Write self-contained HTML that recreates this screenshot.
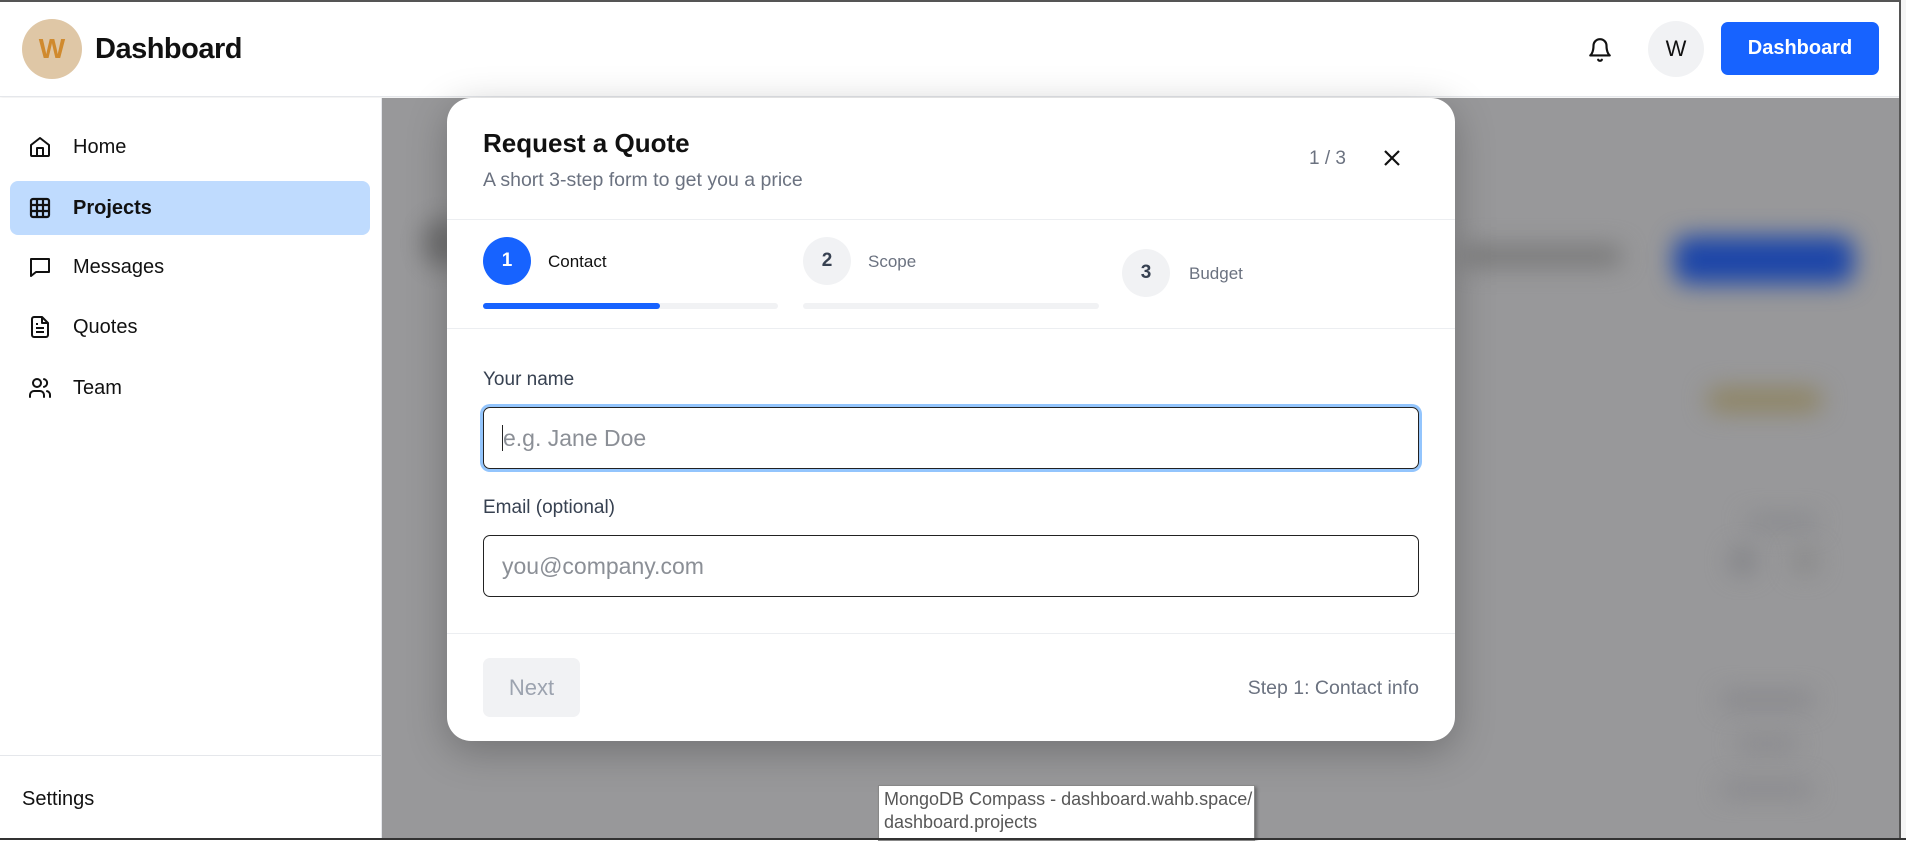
<!DOCTYPE html>
<html><head><meta charset="utf-8"><style>
*{box-sizing:border-box;margin:0;padding:0}
body{width:1906px;height:840px;overflow:hidden;background:#fff;font-family:"Liberation Sans",Arial,sans-serif;position:relative;color:#111}
.abs{position:absolute}
#top{left:0;top:0;width:1906px;height:2px;background:#555}
#header{left:0;top:0;width:1900px;height:97px;background:#fff;border-bottom:1px solid #e5e7eb;box-shadow:0 2px 4px rgba(0,0,0,.06)}
#rline{left:1899px;top:0;width:2px;height:840px;background:#555}
#rstrip{left:1901px;top:0;width:5px;height:840px;background:#f5f5f5}
.logo{left:22px;top:19px;width:60px;height:60px;border-radius:50%;background:#dfc7a6;color:#d08a2e;font-size:28px;font-weight:bold;text-align:center;line-height:60px}
.title{left:95px;top:33px;font-size:29px;font-weight:bold;letter-spacing:-0.5px}
#side{left:0;top:98px;width:382px;height:742px;background:#fff;border-right:1px solid #e5e7eb}
.item{position:absolute;left:10px;width:360px;height:54px;border-radius:8px;font-size:20px;line-height:54px;padding-left:63px}
.item svg{position:absolute;left:18px;top:15px}
.act{background:#bfdbfe;font-weight:bold}
#overlay{left:382px;top:98px;width:1517px;height:742px;background:#98989a;overflow:hidden}
.blur{position:absolute;filter:blur(12px)}
#modal{left:447px;top:98px;width:1008px;height:643px;background:#fff;border-radius:24px;box-shadow:0 10px 40px rgba(0,0,0,.25)}
.hr{position:absolute;left:0;width:1008px;height:1px;background:#eceef1}
.circ{position:absolute;width:48px;height:48px;border-radius:50%;text-align:center;line-height:48px;font-size:19px;font-weight:bold}
.lbl{position:absolute;font-size:17px}
.bar{position:absolute;height:6px;border-radius:3px;background:#f1f2f4}
.input{position:absolute;left:36px;width:936px;height:62px;border:1.5px solid #222;border-radius:7px;font-size:23px;color:#8b8f96;padding-left:18px;line-height:60px}
.flabel{position:absolute;left:36px;font-size:19px;color:#374151}
#tip{left:878px;top:785px;width:377px;height:56px;background:#fff;border:1px solid #888;box-shadow:2px 2px 3px rgba(0,0,0,.3);font-size:18px;color:#575757;padding:2px 0 0 5px;line-height:23px}
</style></head><body>
<div id="header" class="abs">
 <div class="abs logo">W</div>
 <div class="abs title">Dashboard</div>
 <svg class="abs" style="left:1587px;top:36px" width="26" height="28" viewBox="0 0 24 24" fill="none" stroke="#111" stroke-width="2" stroke-linecap="round" stroke-linejoin="round"><path d="M6 8a6 6 0 0 1 12 0c0 7 3 9 3 9H3s3-2 3-9"/><path d="M10.3 21a1.94 1.94 0 0 0 3.4 0"/></svg>
 <div class="abs" style="left:1648px;top:21px;width:56px;height:56px;border-radius:50%;background:#f1f2f4;text-align:center;line-height:56px;font-size:22px">W</div>
 <div class="abs" style="left:1721px;top:22px;width:158px;height:53px;border-radius:7px;background:#1763ff;color:#fff;font-weight:bold;font-size:20px;text-align:center;line-height:53px">Dashboard</div>
</div>
<div id="side" class="abs">
 <div class="item" style="top:22px"><svg width="24" height="24" viewBox="0 0 24 24" fill="none" stroke="#111" stroke-width="2" stroke-linejoin="round"><path d="M3 10l9-7 9 7v10a1 1 0 0 1-1 1H4a1 1 0 0 1-1-1z"/><path d="M9 21v-8h6v8"/></svg>Home</div>
 <div class="item act" style="top:83px"><svg width="24" height="24" viewBox="0 0 24 24" fill="none" stroke="#111" stroke-width="2.2"><rect x="3" y="3" width="18" height="18" rx="2"/><path d="M3 9h18M3 15h18M9 3v18M15 3v18"/></svg>Projects</div>
 <div class="item" style="top:142px"><svg width="24" height="24" viewBox="0 0 24 24" fill="none" stroke="#111" stroke-width="2" stroke-linejoin="round"><path d="M3 4h18v13H8l-5 4z"/></svg>Messages</div>
 <div class="item" style="top:202px"><svg width="24" height="24" viewBox="0 0 24 24" fill="none" stroke="#111" stroke-width="2" stroke-linejoin="round"><path d="M14 2H6a2 2 0 0 0-2 2v16a2 2 0 0 0 2 2h12a2 2 0 0 0 2-2V8z"/><path d="M14 2v6h6M8 13h8M8 17h8M8 9h2"/></svg>Quotes</div>
 <div class="item" style="top:263px"><svg width="24" height="24" viewBox="0 0 24 24" fill="none" stroke="#111" stroke-width="2" stroke-linecap="round"><circle cx="9" cy="7" r="4"/><path d="M2 21v-2a4 4 0 0 1 4-4h6a4 4 0 0 1 4 4v2M16 3.1a4 4 0 0 1 0 7.8M22 21v-2a4 4 0 0 0-3-3.9"/></svg>Team</div>
 <div class="abs" style="left:0;top:657px;width:381px;height:1px;background:#e5e7eb"></div>
 <div class="abs" style="left:22px;top:690px;font-size:20px">Settings</div>
</div>
<div id="overlay" class="abs">
 <div class="blur" style="left:40px;top:120px;width:40px;height:50px;border-radius:50%;background:#555;opacity:.6"></div>
 <div class="blur" style="left:1080px;top:148px;width:160px;height:20px;border-radius:9px;background:#777"></div>
 <div class="blur" style="left:1292px;top:138px;width:180px;height:48px;border-radius:14px;background:#1d46a8"></div>
 <div class="blur" style="left:1325px;top:290px;width:115px;height:24px;border-radius:12px;background:#8e8462"></div>
 <div class="blur" style="left:1365px;top:418px;width:70px;height:12px;background:#85868a"></div>
 <div class="blur" style="left:1348px;top:450px;width:26px;height:26px;border-radius:50%;background:#808185"></div>
 <div class="blur" style="left:1410px;top:450px;width:26px;height:26px;border-radius:50%;background:#888"></div>
 <div class="blur" style="left:1340px;top:595px;width:90px;height:14px;background:#858589"></div>
 <div class="blur" style="left:1355px;top:640px;width:60px;height:12px;background:#858589"></div>
 <div class="blur" style="left:1340px;top:685px;width:90px;height:12px;background:#858589"></div>
</div>
<div id="modal" class="abs">
 <div class="abs" style="left:36px;top:30px;font-size:26px;font-weight:bold">Request a Quote</div>
 <div class="abs" style="left:36px;top:71px;font-size:19.5px;color:#6b7280">A short 3-step form to get you a price</div>
 <div class="abs" style="left:862px;top:50px;font-size:19px;color:#6b7280">1 / 3</div>
 <svg class="abs" style="left:935px;top:50px" width="20" height="20" viewBox="0 0 20 20" stroke="#111" stroke-width="2.2"><path d="M3 3l14 14M17 3L3 17"/></svg>
 <div class="hr" style="top:121px"></div>
 <div class="circ" style="left:36px;top:139px;background:#1763ff;color:#fff">1</div>
 <div class="lbl" style="left:101px;top:154px;color:#111">Contact</div>
 <div class="bar" style="left:36px;top:205px;width:295px"></div>
 <div class="bar" style="left:36px;top:205px;width:177px;background:#1763ff"></div>
 <div class="circ" style="left:356px;top:139px;background:#f1f2f4;color:#374151">2</div>
 <div class="lbl" style="left:421px;top:154px;color:#6b7280">Scope</div>
 <div class="bar" style="left:356px;top:205px;width:296px"></div>
 <div class="circ" style="left:675px;top:151px;background:#f1f2f4;color:#374151">3</div>
 <div class="lbl" style="left:742px;top:166px;color:#6b7280">Budget</div>
 <div class="hr" style="top:230px"></div>
 <div class="flabel" style="top:271px">Your name</div>
 <div class="input" style="top:309px;box-shadow:0 0 0 3px #93c5fd"><span style="border-left:1.5px solid #222;padding-left:0">e.g. Jane Doe</span></div>
 <div class="flabel" style="top:399px">Email (optional)</div>
 <div class="input" style="top:437px">you@company.com</div>
 <div class="hr" style="top:535px"></div>
 <div class="abs" style="left:36px;top:560px;width:97px;height:59px;border-radius:7px;background:#f1f2f4;color:#9ca3af;font-size:22px;text-align:center;line-height:59px">Next</div>
 <div class="abs" style="right:36px;top:579px;font-size:19.5px;color:#6b7280">Step 1: Contact info</div>
</div>
<div id="tip" class="abs">MongoDB Compass - dashboard.wahb.space/<br>dashboard.projects</div>
<div id="top" class="abs"></div>
<div id="rline" class="abs"></div>
<div id="rstrip" class="abs"></div>
<div class="abs" style="left:0;top:838px;width:1906px;height:2px;background:#333"></div>
</body></html>
